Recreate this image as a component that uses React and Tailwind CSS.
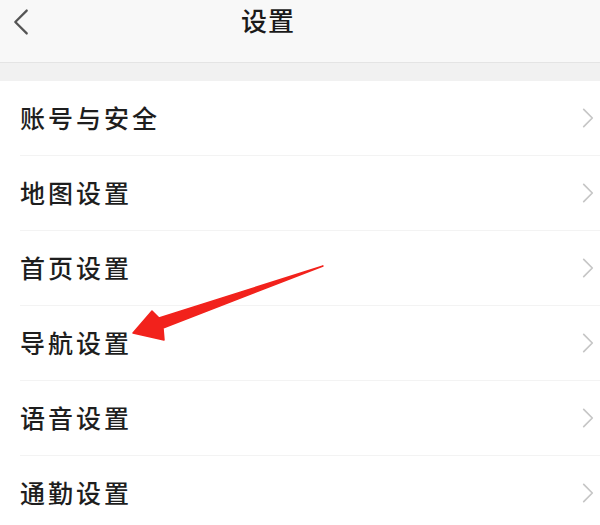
import React from 'react';

const items = ['账号与安全', '地图设置', '首页设置', '导航设置', '语音设置', '通勤设置'];

const Chevron = ({ dir = 'right', className = '' }) => (
    <svg viewBox="0 0 14 24" className={className} fill="none" strokeWidth="2" strokeLinecap="round" strokeLinejoin="round">
        {dir === 'right' ? <path d="M2 2 L12 12 L2 22" /> : <path d="M12 2 L2 12 L12 22" />}
    </svg>
);

const App = () => {
    return (
        <div className="relative w-[600px] h-[525px] overflow-hidden bg-white" style={{ fontFamily: '"Noto Sans CJK SC", "Noto Sans", sans-serif' }}>
            {/* Header */}
            <div className="relative h-[62px] bg-[#f8f8f8]">
                <Chevron dir="left" className="absolute left-[13px] top-[8px] w-[16px] h-[28px] stroke-[#555]" />
                <div className="absolute left-[241px] top-[1px] text-[26px] text-[#1a1a1a] font-medium tracking-[1px] leading-[38px]">设置</div>
            </div>

            {/* Gray band */}
            <div className="h-[19px] bg-[#f1f1f1] border-t border-[#e4e4e4]" />

            {/* List */}
            <div className="flex flex-col">
                {items.map((item) => (
                    <div key={item} className="pl-[20px]">
                        <div className="h-[75px] flex items-center pr-[6px] border-b border-[#f3f3f3]">
                            <span className="flex-1 text-[25px] text-[#1e1e1e] font-medium tracking-[3px]">{item}</span>
                            <Chevron className="w-[12px] h-[22px] stroke-[#c6c6c6]" />
                        </div>
                    </div>
                ))}
            </div>

            {/* Red arrow annotation */}
            <svg className="absolute left-0 top-0 w-[600px] h-[525px] pointer-events-none" viewBox="0 0 600 525">
                <polygon
                    points="133,333 152,311 159,318 323,266 163,328 164,340"
                    fill="#f2221c"
                    stroke="#f2221c"
                    strokeWidth="1.5"
                    strokeLinejoin="round"
                />
            </svg>
        </div>
    );
};

export default App;
